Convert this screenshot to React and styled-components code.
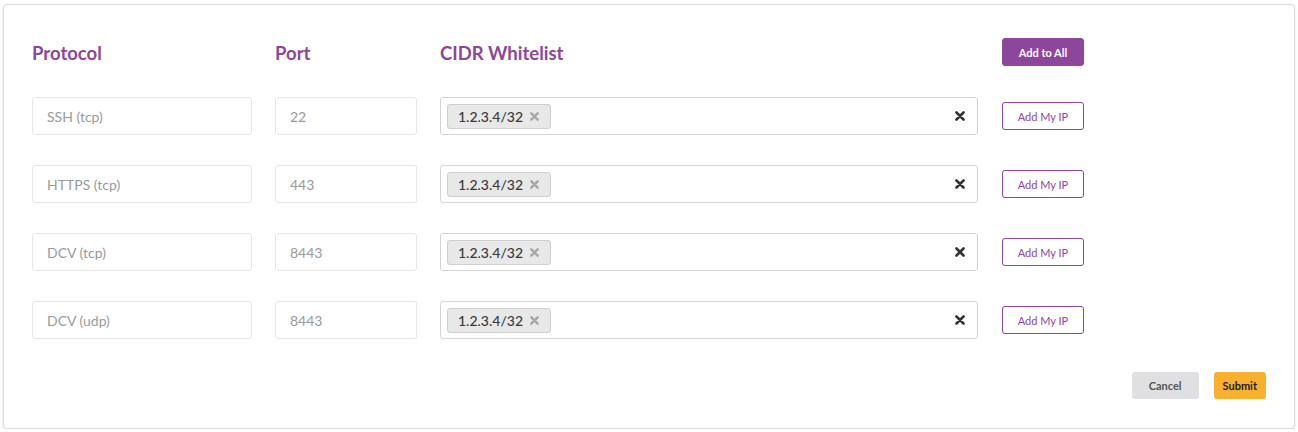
import React from 'react'
import styled, { createGlobalStyle } from 'styled-components'

const GlobalStyle = createGlobalStyle`
    body {
        margin: 0;
        background: #fff;
        font-family: Lato, "Open Sans", sans-serif;
    }
`

const rules = [
    { protocol: 'SSH (tcp)', port: '22' },
    { protocol: 'HTTPS (tcp)', port: '443' },
    { protocol: 'DCV (tcp)', port: '8443' },
    { protocol: 'DCV (udp)', port: '8443' },
]

function Cross({ size = 10, color = '#333' }) {
    return (
        <svg width={size} height={size} viewBox="0 0 10 10">
            <path d="M1.5 1.5 L8.5 8.5 M8.5 1.5 L1.5 8.5" stroke={color} strokeWidth="2.6" strokeLinecap="round" />
        </svg>
    )
}

function App() {
    return (
        <>
            <GlobalStyle />
            <Card>
                <Grid>
                    <Heading>Protocol</Heading>
                    <Heading>Port</Heading>
                    <Heading>CIDR Whitelist</Heading>
                    <PurpleButton $filled>Add to All</PurpleButton>

                    {rules.map((rule, i) => (
                        <React.Fragment key={i}>
                            <Field>{rule.protocol}</Field>
                            <Field>{rule.port}</Field>
                            <TagBox>
                                <Tag>
                                    1.2.3.4/32
                                    <Cross size={9} color="#a6a6a6" />
                                </Tag>
                                <Clear><Cross size={10} color="#333" /></Clear>
                            </TagBox>
                            <PurpleButton>Add My IP</PurpleButton>
                        </React.Fragment>
                    ))}
                </Grid>
                <Footer>
                    <FooterButton $kind="cancel">Cancel</FooterButton>
                    <FooterButton $kind="submit">Submit</FooterButton>
                </Footer>
            </Card>
        </>
    )
}

const Card = styled.div`
    box-sizing: border-box;
    width: 1292px;
    height: 425px;
    margin: 4px 0 0 3px;
    padding: 33px 28px 28px 28px;
    border: 1px solid #dcdcdc;
    border-radius: 4px;
    box-shadow: 0 1px 3px rgba(0, 0, 0, 0.12);
    background: #fff;
`

const Grid = styled.div`
    display: grid;
    grid-template-columns: 220px 142px 538px 82px;
    column-gap: 23px;
    grid-template-rows: 29px repeat(4, 38px);
    row-gap: 30px;
    align-items: center;

    & > :nth-child(4n) {
        margin-left: 1px;
    }
`

const Heading = styled.div`
    color: #8d479a;
    font-size: 18.5px;
    font-weight: 700;
    line-height: 28px;
    margin-top: 1px;
`

const Field = styled.div`
    box-sizing: border-box;
    height: 38px;
    display: flex;
    align-items: center;
    padding: 0 14px;
    border: 1px solid #e6e6e6;
    border-radius: 3px;
    color: #9a9a9a;
    font-size: 14px;
`

const TagBox = styled.div`
    box-sizing: border-box;
    height: 38px;
    display: flex;
    align-items: center;
    padding: 0 12px 0 6px;
    border: 1px solid #d4d4d4;
    border-radius: 3px;
`

const Tag = styled.span`
    box-sizing: border-box;
    height: 25px;
    display: inline-flex;
    align-items: center;
    gap: 7px;
    padding: 0 11px 0 10px;
    background: #e8e8e8;
    border: 1px solid #cfcfcf;
    border-radius: 3px;
    color: #3a3a3a;
    font-size: 14px;
    font-weight: 500;
`

const Clear = styled.span`
    margin-left: auto;
    display: flex;
    align-items: center;
`

const PurpleButton = styled.button`
    box-sizing: border-box;
    align-self: ${({ $filled }) => ($filled ? 'start' : 'center')};
    width: 82px;
    height: 28px;
    padding: 0;
    border: 1px solid #8d479a;
    border-radius: 3px;
    background: ${({ $filled }) => ($filled ? '#8d479a' : '#fff')};
    color: ${({ $filled }) => ($filled ? '#fff' : '#8d479a')};
    font-family: Lato, sans-serif;
    font-size: 11px;
    font-weight: ${({ $filled }) => ($filled ? 700 : 400)};
    cursor: pointer;
`

const Footer = styled.div`
    display: flex;
    justify-content: flex-end;
    gap: 15px;
    margin-top: 33px;
    padding-right: 0;
`

const FooterButton = styled.button`
    box-sizing: border-box;
    height: 27px;
    padding: 0 ${({ $kind }) => ($kind === 'cancel' ? '17px' : '9px')};
    border: none;
    border-radius: 3px;
    background: ${({ $kind }) => ($kind === 'cancel' ? '#e0e0e2' : '#f7b12f')};
    color: ${({ $kind }) => ($kind === 'cancel' ? '#555' : '#1a1a1a')};
    font-family: Lato, sans-serif;
    font-size: 11px;
    font-weight: 700;
    cursor: pointer;
`

export default App
